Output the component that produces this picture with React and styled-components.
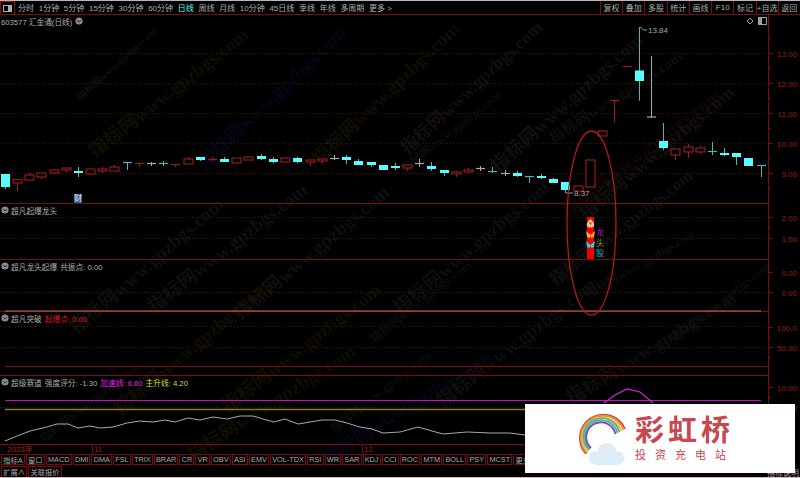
import React from "react"
import styled, { createGlobalStyle } from "styled-components"

const FONT = `"Liberation Sans", "Noto Sans CJK SC", sans-serif`
const LINE = "#7c0b0b"
const RED = "#a01c1c"
const CYAN = "#54ffff"
const WICK = "#4fb6b6"
const GREY = "#acacac"

const periods = ["分时", "1分钟", "5分钟", "15分钟", "30分钟", "60分钟", "日线", "周线", "月线", "10分钟", "45日线", "季线", "年线", "多周期", "更多 >"]
const tools = ["复权", "叠加", "多股", "统计", "画线", "F10", "标记", "+自选", "返回"]
const tabs = ["指标A", "窗口", "MACD", "DMI", "DMA", "FSL", "TRIX", "BRAR", "CR", "VR", "OBV", "ASI", "EMV", "VOL-TDX", "RSI", "WR", "SAR", "KDJ", "CCI", "ROC", "MTM", "BOLL", "PSY", "MCST", "更多"]

// kind, x, high, top, bottom, low (page pixels)
const candles = [
  ["c", 5, 174, 174, 187, 189], ["r", 17, 179, 179.5, 183, 191], ["r", 29, 173, 175, 180, 180], ["r", 41, 173, 173, 177, 179],
  ["r", 54, 170, 170, 173, 174], ["r", 66, 168, 168, 170, 172], ["c", 78, 167, 171, 173, 177], ["r", 90, 169, 169, 174, 175],
  ["r", 102, 167, 169, 171, 173], ["r", 114, 165, 167, 171, 171], ["t", 127, 162, 162, 163, 170], ["r", 139, 163, 163, 164, 167],
  ["w", 151, 162, 163, 164, 166], ["t", 163, 161, 163, 164, 166], ["r", 175, 164, 164, 165, 167], ["r", 188, 157, 159, 164, 164],
  ["c", 200, 157, 157, 160, 161], ["r", 212, 157, 159, 160, 161], ["c", 224, 157, 159, 162, 162], ["r", 236, 158, 158, 163, 163],
  ["r", 248, 157, 157, 160, 160], ["c", 261, 154, 156, 159, 160], ["c", 273, 157, 159, 162, 163], ["r", 285, 158, 158, 162, 162],
  ["c", 297, 157, 158, 162, 163], ["r", 310, 160, 160, 162, 166], ["r", 322, 159, 159, 161, 163], ["w", 334, 155, 158, 159, 160],
  ["c", 346, 155, 157, 160, 164], ["c", 358, 159, 161, 165, 165], ["c", 371, 162, 162, 165, 167], ["c", 383, 165, 165, 170, 170],
  ["c", 395, 163, 166, 168, 170], ["r", 407, 165, 165, 168, 171], ["w", 419, 159, 163, 164, 167], ["c", 431, 162, 166, 169, 171],
  ["c", 444, 170, 170, 173, 176], ["r", 456, 171, 172, 174, 177], ["r", 468, 168, 170, 172, 172], ["w", 480, 166, 168, 169, 171],
  ["c", 492, 167, 171, 172, 173], ["w", 505, 170, 173, 174, 176], ["c", 517, 171, 173, 176, 177], ["t", 529, 176, 176, 177, 183],
  ["c", 541, 174, 176, 178, 179], ["c", 553, 178, 179, 183, 183], ["c", 565, 182, 182, 190, 193], ["r", 578, 186, 186, 191, 191],
  ["r", 590, 160, 160, 187, 187], ["r", 602, 131, 131, 136, 136], ["r", 614, 100, 100, 101, 122], ["r", 627, 66, 66, 67, 67],
  ["c", 639, 27, 70.5, 81, 100.7], ["w", 651, 56, 116.5, 117.5, 117.5], ["c", 663, 123, 141, 148, 150], ["r", 675, 149, 149, 155, 160],
  ["r", 688, 144, 147, 152, 158], ["r", 700, 146, 148, 152, 154], ["c", 712, 142, 151, 152, 155], ["c", 724, 148, 153, 155, 156],
  ["c", 736, 153, 153, 157, 165], ["c", 748, 158, 158, 166, 166], ["t", 761, 165, 165, 166, 177],
]

const curve = "5,441 17,436 30,431 43,428 57,424 68,424 78,428 90,426 100,428 113,427 127,423 140,421 153,422 165,420 175,422 188,418 200,420 213,417 227,419 240,416 253,416 263,419 274,422 285,419 298,424 310,422 322,420 335,420 347,423 360,427 372,429 383,433 400,432 418,427 432,431 443,434 467,432 490,433 510,433 525,435"

const marks = [
  [116, 62, 10, "#1d1d1d", -42], [167, 90, 19, "#1c1c00", -38], [270, 95, 19, "#0c0c2c", -44], [384, 91, 19, "#1c1c00", -44],
  [470, 85, 18, "#1e1e1e", -43], [565, 100, 19, "#1e1e1e", -42], [615, 95, 15, "#1b1b1b", -33], [640, 150, 19, "#250a0a", -38],
  [655, 150, 19, "#1e1e1e", -40], [145, 263, 19, "#1c1c1c", -41], [226, 245, 19, "#1c1c1c", -38], [310, 250, 19, "#1c1c1c", -40],
  [190, 345, 19, "#1c1c00", -40], [300, 345, 19, "#1c1c00", -38], [270, 400, 19, "#1c1c00", -33], [405, 405, 19, "#0c0c2c", -33],
  [470, 245, 19, "#1a1a1a", -40], [620, 225, 17, "#1e1e1e", -38], [640, 262, 12, "#1a1a1a", -30], [420, 300, 12, "#181818", -38],
  [515, 340, 19, "#1a1a1a", -38], [650, 345, 19, "#1a1a1a", -32], [90, 400, 12, "#181818", -38], [450, 130, 12, "#181818", -38],
  [720, 300, 12, "#181818", -38], [380, 390, 12, "#181818", -38],
]

function Candle({ kind, x, high, top, bottom, low }) {
  const stroke = kind === "r" ? RED : kind === "c" ? WICK : kind === "t" ? WICK : GREY
  const flat = bottom - top <= 1.5
  return (
    <g>
      <line x1={x + 0.5} x2={x + 0.5} y1={high} y2={low} stroke={stroke} />
      {flat ? (
        <line x1={x - 4} x2={x + 5} y1={top + 0.5} y2={top + 0.5} stroke={stroke} strokeWidth="1.2" />
      ) : kind === "c" ? (
        <rect x={x - 4} y={top} width="9" height={bottom - top} fill={CYAN} />
      ) : (
        <rect x={x - 4} y={top} width="9" height={bottom - top} fill="#000" stroke={stroke} strokeWidth="1.1" />
      )}
    </g>
  )
}

function Grid({ rows }) {
  return rows.map((y) => (
    <line key={y} x1="0" x2="768" y1={y + 0.5} y2={y + 0.5} stroke="#560a0a" strokeDasharray="1 2" />
  ))
}

function Axis({ top, height, labels, minor = [] }) {
  return (
    <AxisSvg viewBox={`768 ${top} 32 ${height}`}>
      <line x1="768.5" x2="768.5" y1={top} y2={top + height} stroke={LINE} />
      {minor.map((y) => (
        <line key={y} x1="768" x2="771" y1={y + 0.5} y2={y + 0.5} stroke={LINE} />
      ))}
      {labels.map(([y, text]) => (
        <g key={y}>
          <line x1="768" x2="773" y1={y + 0.5} y2={y + 0.5} stroke={LINE} />
          <AxisText x="797" y={y + 3.5} textAnchor="end">{text}</AxisText>
        </g>
      ))}
    </AxisSvg>
  )
}

function Chevron() {
  return (
    <ChevronIcon width="8" height="8" viewBox="0 0 8 8">
      <circle cx="4" cy="4" r="3.6" fill="#8a8a8a" />
      <path d="M2.2 3.2 L4 5 L5.8 3.2" fill="none" stroke="#222" strokeWidth="1" />
    </ChevronIcon>
  )
}

function Butterfly({ x, y, color }) {
  return (
    <path
      transform={`translate(${x} ${y})`}
      d="M0 1 L-4.5 -3 L-3.5 3 L-1 4 L0 2 L1 4 L3.5 3 L4.5 -3 Z"
      fill={color}
    />
  )
}

export default function App() {
  return (
    <>
      <GlobalStyle />
      <Screen>
        <Watermarks>
          {marks.map(([x, y, size, color, turn], i) => (
            <Mark key={i} style={{ left: x, top: y, fontSize: size, color, transform: `translate(-50%, -50%) rotate(${turn}deg)` }}>
              指标网www.gpzbgs.com
            </Mark>
          ))}
        </Watermarks>

        <TopBar>
          <LayoutButton>
            <svg width="9" height="7" viewBox="0 0 9 7">
              <rect x="0.5" y="0.5" width="8" height="6" fill="none" stroke="#b0b0b0" />
              <rect x="5" y="1" width="3" height="5" fill="#b0b0b0" />
            </svg>
          </LayoutButton>
          <Periods>
            {periods.map((p) => (
              <Period key={p} $active={p === "日线"}>{p}</Period>
            ))}
          </Periods>
          <Tools>
            {tools.map((t) => (
              <Tool key={t}>{t}</Tool>
            ))}
          </Tools>
        </TopBar>

        <Rows>
          <PanelRow $h={189}>
            <Plot>
              <ChartSvg viewBox="0 15 768 189">
                <Grid rows={[53, 83, 113, 143, 173]} />
                {candles.map(([kind, x, high, top, bottom, low]) => (
                  <Candle key={x} kind={kind} x={x} high={high} top={top} bottom={bottom} low={low} />
                ))}
                <path d="M640 27 L644 30 L647 30" fill="none" stroke="#9a9a9a" />
                <ChartText x="648" y="33">13.84</ChartText>
                <path d="M566 193 L573 193" fill="none" stroke="#9a9a9a" />
                <ChartText x="574" y="196">8.37</ChartText>
                <line x1="0" x2="768" y1="203.5" y2="203.5" stroke={LINE} />
              </ChartSvg>
              <PanelTitle>
                <span>603577 汇金通(日线)</span>
                <Chevron />
              </PanelTitle>
              <CornerTools>
                <svg width="8" height="8" viewBox="0 0 8 8">
                  <path d="M4 1 L7 4 L4 7 L1 4 Z" fill="none" stroke="#a0a0a0" />
                </svg>
                <svg width="9" height="8" viewBox="0 0 9 8">
                  <rect x="0.5" y="0.5" width="8" height="7" fill="#000" stroke="#a0a0a0" />
                  <rect x="1" y="1" width="3" height="6" fill="#a0a0a0" />
                </svg>
              </CornerTools>
              <Badge>财</Badge>
            </Plot>
            <Axis top={15} height={189} labels={[[53, "13.00"], [83, "12.00"], [113, "11.00"], [143, "10.00"], [173, "9.00"]]} minor={[68, 98, 128, 158, 188, 38]} />
          </PanelRow>

          <PanelRow $h={56}>
            <Plot>
              <ChartSvg viewBox="0 204 768 56">
                <Grid rows={[217, 238]} />
                <rect x="587" y="217" width="7" height="42" fill="#f40000" />
                <path d="M590.5 219 C588 221 586 224 587 226 C588 228 593 228 594 226 C595 224 593 221 590.5 219 Z" fill="#e8c890" />
                <circle cx="590.5" cy="223.5" r="1.3" fill="#b06a30" />
                <Butterfly x={590.5} y={234} color="#e8b428" />
                <Butterfly x={590.5} y={244} color="#2fd0d8" />
                <Mark3 x="596" y="235" fill="#b01cb0">龙</Mark3>
                <Mark3 x="596" y="246" fill="#9a9a18">头</Mark3>
                <Mark3 x="596" y="256" fill="#18b0b0">股</Mark3>
                <line x1="0" x2="768" y1="259.5" y2="259.5" stroke={LINE} />
              </ChartSvg>
              <PanelTitle>
                <Chevron />
                <span>超凡起爆龙头</span>
              </PanelTitle>
            </Plot>
            <Axis top={204} height={56} labels={[[217, "2.00"], [238, "1.00"]]} minor={[227]} />
          </PanelRow>

          <PanelRow $h={52}>
            <Plot>
              <ChartSvg viewBox="0 260 768 52">
                <Grid rows={[292]} />
                <line x1="0" x2="768" y1="311.5" y2="311.5" stroke={LINE} />
                <line x1="5" x2="761" y1="311" y2="311" stroke="#c46a6a" strokeWidth="1.2" />
              </ChartSvg>
              <PanelTitle>
                <Chevron />
                <span>超凡龙头起爆</span>
                <span>共振点: 0.00</span>
              </PanelTitle>
            </Plot>
            <Axis top={260} height={52} labels={[[272, "0.00"], [292, "0.00"]]} />
          </PanelRow>

          <PanelRow $h={64}>
            <Plot>
              <ChartSvg viewBox="0 312 768 64">
                <Grid rows={[326, 347]} />
                <line x1="5" x2="768" y1="366.5" y2="366.5" stroke="#800b0b" />
                <line x1="0" x2="768" y1="375.5" y2="375.5" stroke={LINE} />
              </ChartSvg>
              <PanelTitle>
                <Chevron />
                <span>超凡突破</span>
                <Value $color="#d81818">起爆点: 0.00</Value>
              </PanelTitle>
            </Plot>
            <Axis top={312} height={64} labels={[[327, "100.0"], [347, "50.00"]]} minor={[337, 357]} />
          </PanelRow>

          <PanelRow $h={69}>
            <Plot>
              <ChartSvg viewBox="0 376 768 69">
                <Grid rows={[407]} />
                <line x1="5" x2="761" y1="400.5" y2="400.5" stroke="#c010c0" strokeWidth="1.2" />
                <line x1="5" x2="761" y1="409.5" y2="409.5" stroke="#80801a" strokeWidth="1.4" />
                <polyline points={curve} fill="none" stroke="#a8a8a8" />
                <polyline points="604,403 615,395 627,389 640,392 653,403" fill="none" stroke="#d820d8" strokeWidth="1.2" />
                <line x1="0" x2="768" y1="444.5" y2="444.5" stroke={LINE} />
              </ChartSvg>
              <PanelTitle>
                <Chevron />
                <span>超级赛道</span>
                <span>强度评分: -1.30</span>
                <Value $color="#e020e0">加速线: 6.60</Value>
                <Value $color="#d8d820">主升线: 4.20</Value>
              </PanelTitle>
            </Plot>
            <Axis top={376} height={69} labels={[[387, "10.00"], [407, "8.00"]]} minor={[397, 417, 427]} />
          </PanelRow>

          <EggOverlay viewBox="0 15 768 430">
            <ellipse cx="591.5" cy="223" rx="24.5" ry="92" fill="none" stroke="#b01c14" strokeWidth="1.3" />
          </EggOverlay>
        </Rows>

        <DateRow>
          <DateCell $w={85}>2023年</DateCell>
          <DateCell $w={268}>11</DateCell>
          <DateCell $w={200}>12</DateCell>
        </DateRow>

        <TabRow>
          {tabs.map((t) => (
            <Tab key={t}>{t}</Tab>
          ))}
        </TabRow>

        <BottomRow>
          <Tab>扩展∧</Tab>
          <Tab>关联报价</Tab>
          <Status>指标说明</Status>
        </BottomRow>

        <Banner>
          <svg width="56" height="60" viewBox="573 408 56 60">
            <g fill="none" strokeWidth="1.8">
              <path d="M586 453 A23.5 23.5 0 1 1 625 428" stroke="#c8504f" />
              <path d="M587 452 A22 22 0 1 1 623.5 429" stroke="#e8913c" />
              <path d="M588 451 A20.2 20.2 0 1 1 621.5 430" stroke="#e8c844" />
              <path d="M589 449 A18.4 18.4 0 1 1 619.5 431" stroke="#6fb45a" />
              <path d="M590 448 A16.6 16.6 0 1 1 617.5 432" stroke="#4fa8d4" />
              <path d="M591 447 A14.8 14.8 0 1 1 615.5 433" stroke="#7a4fa0" />
            </g>
            <g fill="#dcedf7">
              <circle cx="607" cy="452" r="10" />
              <circle cx="595" cy="457" r="6.5" />
              <circle cx="618" cy="457" r="6.5" />
              <rect x="595" y="456" width="23" height="8" />
            </g>
          </svg>
          <BannerText>
            <BrandName>彩虹桥</BrandName>
            <BrandLine>投资充电站</BrandLine>
          </BannerText>
        </Banner>
      </Screen>
    </>
  )
}

const GlobalStyle = createGlobalStyle`
  html, body {
    margin: 0;
    padding: 0;
    background: #000;
  }
`

const Screen = styled.div`
  position: relative;
  display: flex;
  flex-direction: column;
  width: 800px;
  height: 478px;
  overflow: hidden;
  background: #000;
  font-family: ${FONT};
  font-size: 8px;
  color: ${GREY};
  border-top: 1px solid #b8b8b8;
  border-bottom: 1px solid #d8b4b4;
  box-sizing: border-box;
`

const Watermarks = styled.div`
  position: absolute;
  inset: 0;
  opacity: 0.55;
`

const Mark = styled.span`
  position: absolute;
  white-space: nowrap;
  font-family: "Liberation Serif", "Noto Sans CJK SC", serif;
  font-weight: 700;
`

const TopBar = styled.div`
  position: relative;
  display: flex;
  height: 13px;
  flex: none;
  border-bottom: 1px solid ${LINE};
  background: #000;
`

const LayoutButton = styled.div`
  display: flex;
  align-items: center;
  justify-content: center;
  width: 15px;
  box-sizing: border-box;
  border: 1px solid #8a1010;
  border-bottom: 0;
`

const Periods = styled.div`
  display: flex;
  flex: 1;
  align-items: center;
  gap: 4.7px;
  padding-left: 3px;
`

const Period = styled.span`
  white-space: nowrap;
  color: ${(p) => (p.$active ? CYAN : GREY)};
`

const Tools = styled.div`
  display: flex;
  width: 200px;
`

const Tool = styled.div`
  display: flex;
  align-items: center;
  justify-content: center;
  flex: 1;
  border-left: 1px solid ${LINE};
  white-space: nowrap;
`

const Rows = styled.div`
  position: relative;
  display: flex;
  flex-direction: column;
  flex: none;
`

const PanelRow = styled.div`
  display: flex;
  height: ${(p) => p.$h}px;
`

const Plot = styled.div`
  position: relative;
  width: 768px;
  height: 100%;
`

const ChartSvg = styled.svg`
  display: block;
  width: 100%;
  height: 100%;
`

const AxisSvg = styled.svg`
  display: block;
  width: 32px;
  height: 100%;
`

const AxisText = styled.text`
  font-family: ${FONT};
  font-size: 8px;
  fill: #981c1c;
`

const ChartText = styled.text`
  font-family: ${FONT};
  font-size: 8px;
  fill: #a8a8a8;
`

const Mark3 = styled.text`
  font-family: ${FONT};
  font-size: 8px;
`

const PanelTitle = styled.div`
  position: absolute;
  top: 1px;
  left: 1px;
  display: flex;
  align-items: center;
  gap: 3px;
  height: 10px;
  font-size: 7.7px;
  white-space: nowrap;
`

const ChevronIcon = styled.svg`
  margin-right: -1px;
`

const Value = styled.span`
  color: ${(p) => p.$color};
`

const CornerTools = styled.div`
  position: absolute;
  top: 1px;
  right: 1px;
  display: flex;
  align-items: center;
  gap: 4px;
  height: 10px;
`

const Badge = styled.div`
  position: absolute;
  left: 74px;
  top: 179px;
  width: 8px;
  height: 9px;
  line-height: 9px;
  text-align: center;
  background: #2a5a90;
  color: #e8e8e8;
`

const EggOverlay = styled.svg`
  position: absolute;
  left: 0;
  top: 0;
  width: 768px;
  height: 430px;
  pointer-events: none;
`

const DateRow = styled.div`
  display: flex;
  flex: none;
  height: 9px;
  padding-left: 5px;
`

const DateCell = styled.div`
  width: ${(p) => p.$w}px;
  padding-left: 1px;
  line-height: 9px;
  color: #a81c1c;
  border-left: 1px solid ${(p) => (p.$w === 85 ? "transparent" : LINE)};
`

const TabRow = styled.div`
  position: relative;
  display: flex;
  flex: none;
  height: 11px;
  gap: 1px;
  padding-left: 1px;
  overflow: hidden;
`

const Tab = styled.div`
  display: flex;
  align-items: center;
  padding: 0 1.2px;
  font-size: 7.3px;
  white-space: nowrap;
  border: 1px solid ${LINE};
`

const BottomRow = styled.div`
  position: relative;
  display: flex;
  flex: 1;
  gap: 1px;
  padding: 1px 0 1px 1px;
`

const Status = styled.div`
  margin-left: auto;
  align-self: flex-end;
  padding-right: 1px;
  line-height: 8px;
  color: #a0a0a0;
`

const Banner = styled.div`
  position: absolute;
  left: 525px;
  top: 403px;
  display: flex;
  align-items: center;
  gap: 6px;
  width: 270px;
  height: 69px;
  padding-left: 48px;
  box-sizing: border-box;
  background: #fff;
`

const BannerText = styled.div`
  display: flex;
  flex-direction: column;
  gap: 3px;
  color: #c9474f;
`

const BrandName = styled.div`
  font-size: 29px;
  line-height: 30px;
  font-weight: 700;
  letter-spacing: 4px;
`

const BrandLine = styled.div`
  font-size: 11px;
  line-height: 13px;
  letter-spacing: 9px;
`
